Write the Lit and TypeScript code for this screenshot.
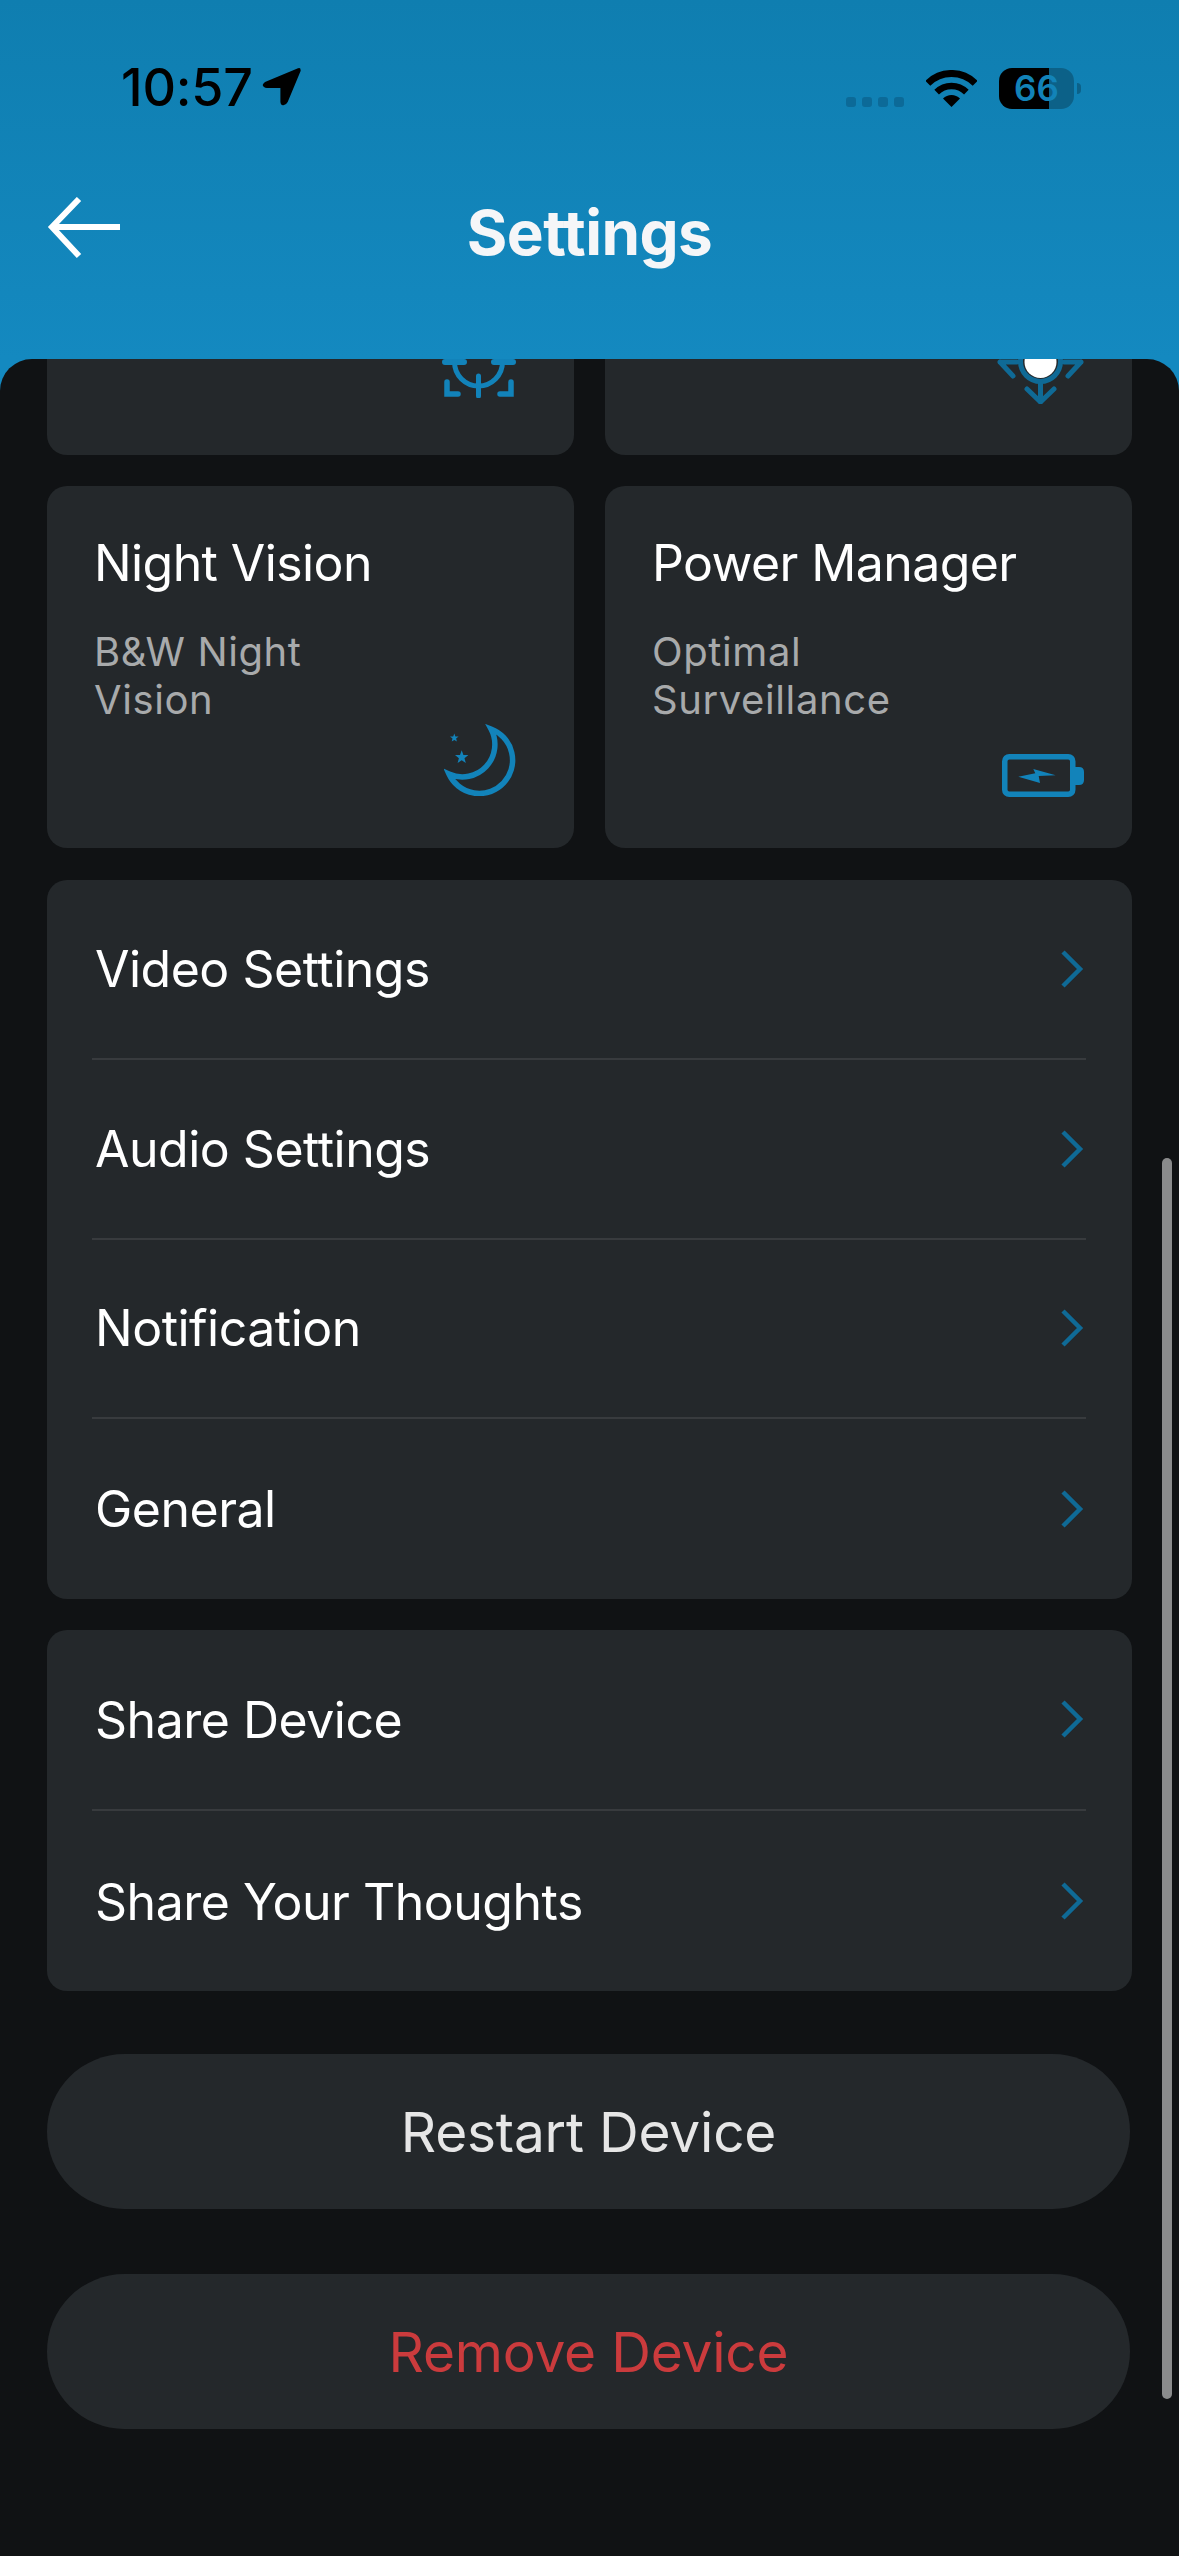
import { LitElement, css, html } from "lit";
import { customElement } from "lit/decorators.js";

const star = (cx: number, cy: number, r: number) => {
  const pts: string[] = [];
  for (let i = 0; i < 10; i++) {
    const rad = i % 2 ? r * 0.42 : r;
    const a = (Math.PI / 5) * i - Math.PI / 2;
    pts.push(`${(cx + rad * Math.cos(a)).toFixed(1)},${(cy + rad * Math.sin(a)).toFixed(1)}`);
  }
  return pts.join(" ");
};

const chevron = html`<svg class="chevron" width="24" height="40" viewBox="0 0 24 40">
  <path d="M3 3 L20 20 L3 37" fill="none" stroke="currentColor" stroke-width="4.5" />
</svg>`;

@customElement("app-root")
export class AppRoot extends LitElement {
  static styles = css`
    :host {
      display: block;
      font-family: "Inter", "Liberation Sans", sans-serif;
    }

    .page {
      position: relative;
      height: 2556px;
      display: flex;
      flex-direction: column;
      overflow: hidden;
      background: linear-gradient(180deg, #0f7eb0 0, #1489c0 359px);
    }

    .header {
      height: 359px;
      flex: none;
    }

    .status {
      height: 56px;
      padding: 60px 98px 0 121px;
      display: flex;
      align-items: center;
      color: #000;
    }

    .time {
      font-size: 52px;
      font-weight: 500;
      letter-spacing: -0.2px;
      line-height: 56px;
      margin-right: 9px;
    }

    .arrow {
      margin-top: -3px;
    }

    .status-right {
      margin-left: auto;
      display: flex;
      align-items: center;
    }

    .dots {
      align-self: flex-end;
      display: flex;
      gap: 6px;
      margin: 0 22px 2px 0;
    }

    .dots i {
      width: 10px;
      height: 10px;
      border-radius: 3px;
      background: #0c6a98;
    }

    .battery {
      width: 75px;
      height: 41px;
      margin-left: 22px;
      border-radius: 13px;
      background: linear-gradient(90deg, #000 66.5%, #0c6188 66.5%);
      color: #1283b8;
      font-size: 35px;
      font-weight: 600;
      line-height: 41px;
      text-align: center;
    }

    .nub {
      width: 4px;
      height: 11px;
      margin-left: 3px;
      border-radius: 0 6px 6px 0;
      background: #0c6188;
    }

    .nav {
      display: grid;
      grid-template-columns: 1fr auto 1fr;
      align-items: start;
      margin-top: 79px;
    }

    .back {
      display: block;
      margin: 2px 0 0 46px;
    }

    .title {
      color: #f5f6f8;
      font-size: 62px;
      font-weight: 700;
      letter-spacing: -0.6px;
      line-height: 64px;
      margin-top: 6px;
    }

    .main {
      flex: 1;
      overflow: hidden;
      padding: 0 47px;
      background: #101214;
      border-radius: 32px 32px 0 0;
      display: flex;
      flex-direction: column;
    }

    .tiles {
      margin-top: -266px;
      display: grid;
      grid-template-columns: 527px 527px;
      grid-auto-rows: 362px;
      gap: 31px;
      flex: none;
    }

    .tile {
      background: #24282b;
      border-radius: 20px;
      display: flex;
      flex-direction: column;
      padding: 49px 0 0 47px;
      box-sizing: border-box;
    }

    .tile-name {
      color: #fff;
      font-size: 50px;
      line-height: 56px;
      letter-spacing: -0.6px;
    }

    .tile-note {
      margin-top: 37px;
      color: #a8aaab;
      font-size: 40px;
      letter-spacing: 0.6px;
      line-height: 48px;
      white-space: pre-line;
    }

    .tile svg {
      display: block;
      margin-top: auto;
      align-self: flex-end;
      flex: none;
    }

    .icon-left {
      margin-right: 58px;
      margin-bottom: 57px;
    }

    .icon-right {
      margin-right: 48px;
      margin-bottom: 51px;
    }

    .list {
      flex: none;
      margin-top: 32px;
      padding: 0 46px 0 45px;
      background: #24282b;
      border-radius: 20px;
      --row: 179.75px;
    }

    .list + .list {
      margin-top: 31px;
      --row: 180.5px;
    }

    .list + .list span {
      padding-top: 2px;
    }

    .row {
      height: var(--row);
      box-sizing: border-box;
      display: flex;
      align-items: center;
      justify-content: space-between;
      color: #fff;
      font-size: 50px;
      letter-spacing: -0.5px;
      border-bottom: 2px solid #383b3e;
    }

    .row:last-child {
      border-bottom: 0;
    }

    .row span {
      padding-left: 3px;
    }

    .chevron {
      color: #0f6a96;
      margin-right: 2px;
    }

    .pill {
      flex: none;
      height: 155px;
      margin-top: 65px;
      width: 1083px;
      border-radius: 78px;
      background: #24282b;
      display: flex;
      align-items: center;
      justify-content: center;
      color: #e6e6e6;
      font-size: 55px;
      letter-spacing: -0.2px;
    }

    .pill.first {
      margin-top: 63px;
    }

    .pill.danger {
      color: #cb3b3d;
    }

    .scrollbar {
      position: absolute;
      left: 1162px;
      top: 1158px;
      width: 10px;
      height: 1241px;
      border-radius: 5px;
      background: #8a8b8c;
    }
  `;

  render() {
    return html`
      <div class="page">
        <div class="header">
          <div class="status">
            <span class="time">10:57</span>
            <svg class="arrow" width="39" height="39" viewBox="0 0 39 39">
              <path
                d="M36 1.2 L3 15 Q-1 18 2 20 Q3 21 5 21 L18.4 21 L18.4 35 Q19 39 22 38 Q24 38 25.7 35 L38.6 4 Q39 0 36 1.2 Z"
                fill="#000"
              />
            </svg>
            <div class="status-right">
              <div class="dots"><i></i><i></i><i></i><i></i></div>
              <svg width="51" height="37" viewBox="0 0 51 37">
                <path d="M1.8 13.3 A33.5 33.5 0 0 1 49.2 13.3" fill="none" stroke="#000" stroke-width="7" />
                <path d="M10.65 22.15 A21 21 0 0 1 40.35 22.15" fill="none" stroke="#000" stroke-width="6.5" />
                <path d="M25.5 37 L17 28.5 A12 12 0 0 1 34 28.5 Z" fill="#000" />
              </svg>
              <div class="battery">66</div>
              <div class="nub"></div>
            </div>
          </div>
          <div class="nav">
            <svg class="back" width="74" height="62" viewBox="0 0 74 62">
              <path d="M74 30 H5 M33 2 L6 30 L33 59" fill="none" stroke="#fff" stroke-width="6" />
            </svg>
            <div class="title">Settings</div>
          </div>
        </div>

        <div class="main">
          <div class="tiles">
            <div class="tile">
              <svg class="icon-left" width="74" height="74" viewBox="0 0 74 74" fill="none" stroke="#1283ba" stroke-width="5" stroke-linecap="round">
                <path d="M3 38 H22 M52 38 H71" stroke-width="6" />
                <circle cx="36.5" cy="38" r="24" />
                <path d="M36.5 52 V72 M36.5 4 V24" />
                <path d="M5 58 V70 H16 M69 58 V70 H58 M5 18 V6 H16 M69 18 V6 H58" stroke-width="5.5" />
              </svg>
            </div>
            <div class="tile">
              <svg class="icon-right" width="87" height="80" viewBox="0 0 87 80" fill="none" stroke="#0f6a96" stroke-width="5" stroke-linecap="round">
                <ellipse cx="43.5" cy="38" rx="16" ry="16" fill="#fff" stroke="none" />
                <circle cx="43.5" cy="37.5" r="20" />
                <path d="M43.5 58 V78 M30 65 L43.5 78 L57 65" stroke-linejoin="round" />
                <path d="M3 38 H20 M3 38 L16 52 M84 38 H67 M84 38 L71 52" stroke-linejoin="round" />
              </svg>
            </div>
            <div class="tile">
              <div class="tile-name">Night Vision</div>
              <div class="tile-note">B&amp;W Night
Vision</div>
              <svg class="icon-left" width="72" height="72" viewBox="0 0 72 72">
                <path
                  fill="none"
                  stroke="#1283ba"
                  stroke-width="5.5"
                  stroke-miterlimit="10"
                  d="M47 5 A33.3 33.3 0 1 1 5 50 A32.5 32.5 0 0 0 47 5 Z"
                />
                <polygon fill="#1283ba" points=${star(10.3, 14, 4.5)} />
                <polygon fill="#1283ba" points=${star(17.7, 33.3, 7)} />
              </svg>
            </div>
            <div class="tile">
              <div class="tile-name">Power Manager</div>
              <div class="tile-note">Optimal
Surveillance</div>
              <svg class="icon-right" width="82" height="43" viewBox="0 0 82 43">
                <rect x="2.75" y="2.75" width="68" height="37.5" rx="4.5" fill="none" stroke="#1283ba" stroke-width="5.5" />
                <path d="M73 13 H77 Q82 13 82 18 V26 Q82 31 77 31 H73 Z" fill="#1283ba" />
                <polygon fill="#1283ba" points="16.3,22.7 33.3,19.3 31.3,15 53.7,21.3 36.7,22 38,29" />
              </svg>
            </div>
          </div>

          <div class="list">
            ${["Video Settings", "Audio Settings", "Notification", "General"].map(
              (name) => html`<div class="row"><span>${name}</span>${chevron}</div>`
            )}
          </div>
          <div class="list">
            ${["Share Device", "Share Your Thoughts"].map(
              (name) => html`<div class="row"><span>${name}</span>${chevron}</div>`
            )}
          </div>

          <div class="pill first">Restart Device</div>
          <div class="pill danger">Remove Device</div>
        </div>

        <div class="scrollbar"></div>
      </div>
    `;
  }
}
